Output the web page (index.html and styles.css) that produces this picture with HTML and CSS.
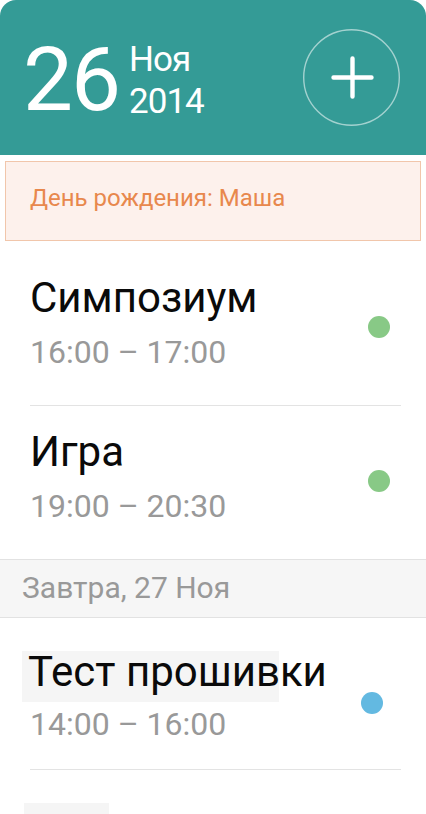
FILE: index.html
```html
<!DOCTYPE html>
<html lang="ru">
<head>
<meta charset="utf-8">
<title>Календарь</title>
<link rel="stylesheet" href="styles.css">
</head>
<body>
<div class="screen">
  <header class="top">
    <div class="date">
      <span class="day">26</span>
      <div class="month-year">
        <span class="month">Ноя</span>
        <span class="year">2014</span>
      </div>
    </div>
    <button class="add" type="button" aria-label="Добавить">
      <svg width="97" height="97" viewBox="0 0 97 97">
        <circle cx="48.5" cy="48.5" r="47.8" fill="none" stroke="rgba(255,255,255,0.55)" stroke-width="1.4"/>
        <path d="M30.5 48.5H68.5M49.5 29.5V67.5" stroke="#fff" stroke-width="4.4" stroke-linecap="round" fill="none"/>
      </svg>
    </button>
  </header>

  <div class="banner">День рождения: Маша</div>

  <ul class="events">
    <li class="event">
      <div class="info">
        <div class="title">Симпозиум</div>
        <div class="time">16:00 – 17:00</div>
      </div>
      <span class="dot green"></span>
    </li>
    <li class="event last">
      <div class="info">
        <div class="title">Игра</div>
        <div class="time">19:00 – 20:30</div>
      </div>
      <span class="dot green"></span>
    </li>
  </ul>

  <div class="section">Завтра, 27 Ноя</div>

  <ul class="events">
    <li class="event tomorrow">
      <div class="info">
        <div class="title highlighted">Тест прошивки</div>
        <div class="time">14:00 – 16:00</div>
      </div>
      <span class="dot blue"></span>
    </li>
    <li class="event placeholder">
      <div class="stub"></div>
    </li>
  </ul>
</div>
</body>
</html>
```

FILE: styles.css
```css
* { box-sizing: border-box; }

html, body {
  margin: 0;
  padding: 0;
  background: #fff;
}

body {
  font-family: Roboto, "Liberation Sans", Arial, sans-serif;
  overflow: hidden;
}

.screen {
  width: 426px;
  height: 814px;
  overflow: hidden;
  background: #fff;
}

/* Header */
.top {
  height: 155px;
  background: #349b96;
  border-radius: 16px 16px 0 0;
  display: flex;
  justify-content: space-between;
  align-items: flex-start;
  padding: 29px 26px 0 27px;
}

.date {
  display: flex;
  align-items: flex-start;
  margin-top: 6px;
  color: #fff;
}

.day {
  font-size: 89px;
  line-height: 89px;
  font-weight: 400;
  letter-spacing: -2px;
  margin-left: -4px;
}

.month-year {
  display: flex;
  flex-direction: column;
  margin-left: 10px;
  margin-top: 4px;
  font-size: 35px;
  line-height: 42px;
  letter-spacing: -1px;
}

.add {
  width: 97px;
  height: 97px;
  padding: 0;
  border: 0;
  background: transparent;
  display: block;
}

.add svg { display: block; }

/* Banner */
.banner {
  margin: 6px 5px 11px 5px;
  height: 80px;
  border: 1px solid #f1c6ab;
  background: #fdf1ec;
  color: #e8884d;
  font-size: 24px;
  display: flex;
  align-items: center;
  padding: 0 0 6px 24px;
}

/* Events */
.events {
  list-style: none;
  margin: 0;
  padding: 0;
}

.event {
  display: flex;
  align-items: flex-start;
  justify-content: space-between;
  margin: 0 25px 0 30px;
  padding: 22px 0 34px 0;
  border-bottom: 1px solid #e3e3e3;
}

.event.last {
  border-bottom: 0;
}

.info {
  display: flex;
  flex-direction: column;
  gap: 11px;
}

.title {
  font-size: 42px;
  line-height: 48px;
  color: #0a0a0a;
}

.time {
  font-size: 32px;
  line-height: 38px;
  color: #999;
}

.dot {
  width: 22px;
  height: 22px;
  border-radius: 50%;
  margin-right: 11px;
  margin-top: 42px;
  flex: none;
}

.green { background: #88c986; }
.blue { background: #63b9e1; }

/* Section header */
.section {
  height: 59px;
  background: #f6f6f6;
  border-top: 1px solid #e2e2e2;
  border-bottom: 1px solid #e2e2e2;
  color: #999;
  font-size: 30px;
  display: flex;
  align-items: center;
  padding: 0 0 3px 22px;
}

.event.tomorrow {
  padding-top: 30px;
  padding-bottom: 26px;
}

.event.tomorrow .info { gap: 9px; }

.event.tomorrow .dot {
  margin-right: 18px;
  margin-top: 44px;
}

.highlighted {
  position: relative;
  z-index: 0;
  margin-left: -2px;
}

.highlighted::before {
  content: "";
  position: absolute;
  left: -6px;
  top: 3px;
  width: 257px;
  height: 51px;
  background: #f5f5f5;
  z-index: -1;
}

.event.placeholder {
  border-bottom: 0;
  padding: 33px 0 0 0;
  margin-left: 24px;
}

.stub {
  width: 85px;
  height: 20px;
  background: #f5f5f5;
}
```
